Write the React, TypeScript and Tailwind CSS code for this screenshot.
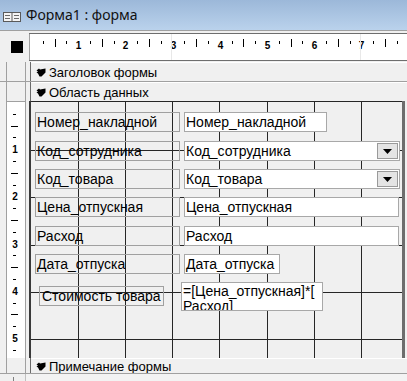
import React from "react";

const F = "font-['Liberation_Sans',Arial,sans-serif]";

const CM = 47.2;

function HRuler() {
  const items: React.ReactNode[] = [];
  for (let k = 0; k < 8; k++) {
    const b = 1 + CM * k;
    [11.8, 35.4].forEach((o, i) => {
      items.push(<rect key={`s${k}${i}`} x={Math.round(b + o)} y={7} width={1} height={3} fill="#000" />);
    });
    items.push(<rect key={`l${k}`} x={Math.round(b + 23.6)} y={5} width={1} height={8} fill="#000" />);
    if (k >= 1) {
      items.push(
        <text key={`n${k}`} x={Math.round(b) + 0.5} y={15} fontSize={10} fontWeight={700} textAnchor="middle" fontFamily="Liberation Sans, Arial, sans-serif" fill="#000">
          {k}
        </text>
      );
    }
  }
  return (
    <svg width={377} height={26} className="block">
      {items}
      <rect x={141} y={0} width={1} height={26} fill="#e8e8e8" />
      <rect x={330} y={0} width={1} height={26} fill="#e8e8e8" />
    </svg>
  );
}

function VRuler() {
  const items: React.ReactNode[] = [];
  for (let k = 0; k < 6; k++) {
    const b = CM * k;
    [11.8, 35.4].forEach((o, i) => {
      items.push(<rect key={`s${k}${i}`} x={6} y={Math.round(b + o)} width={3} height={1} fill="#000" />);
    });
    items.push(<rect key={`l${k}`} x={4} y={Math.round(b + 23.6)} width={7} height={1} fill="#000" />);
    if (k >= 1) {
      items.push(
        <text key={`n${k}`} x={8} y={Math.round(b) + 4} fontSize={10} fontWeight={700} textAnchor="middle" fontFamily="Liberation Sans, Arial, sans-serif" fill="#000">
          {k}
        </text>
      );
    }
  }
  return (
    <svg width={18} height={256} className="block">
      {items}
    </svg>
  );
}

function Grid() {
  const xs = [47, 94, 141, 188, 236, 283, 330];
  const ys = [48, 95, 143, 190, 237];
  return (
    <svg width={371} height={256} className="absolute left-0 top-0">
      {xs.map((x) => (
        <rect key={`x${x}`} x={x} y={0} width={1} height={256} fill="#262626" />
      ))}
      {ys.map((y) => (
        <rect key={`y${y}`} x={0} y={y} width={371} height={1} fill="#262626" />
      ))}
    </svg>
  );
}

function SectionIcon() {
  return (
    <svg width={10} height={9} viewBox="0 0 10 9" className="block">
      <path d="M0.5 2.5 L3 0.5 L4 1.5 L9.5 0.5 L9.5 4.5 L5.5 8.5 L3.5 8.5 L2 5.5 L0.5 4.5 L2 3.5 Z" fill="#000" />
    </svg>
  );
}

function SectionBar({ title }: { title: string }) {
  return (
    <div className="flex h-[19px]">
      <div className="w-[30px] h-full flex">
        <div className="ml-[6px] w-[20px] h-full border-x border-[#a0a0a0] bg-[#f0f0f0]" />
      </div>
      <div className="w-[1px] h-full bg-[#6a6a6a]" />
      <div className="flex-1 h-full flex items-center bg-[#f0f0f0] border-t border-white">
        <div className="ml-[5px] mr-[3px]">
          <SectionIcon />
        </div>
        <span className={`${F} text-[13px] text-black leading-none`}>{title}</span>
      </div>
    </div>
  );
}

function ComboButton() {
  return (
    <div className="absolute right-[1px] top-[1px] w-[21px] h-[16px] bg-[#e4e4e4] border border-[#9a9a9a] flex items-center justify-center">
      <svg width={9} height={5} viewBox="0 0 9 5" className="block">
        <path d="M0 0 H9 L4.5 5 Z" fill="#000" />
      </svg>
    </div>
  );
}

const LBL = `absolute h-[20px] border border-[#a0a0a0] text-[14px] leading-[18px] text-black whitespace-nowrap overflow-hidden ${F}`;
const TB = `absolute h-[20px] border border-[#a8a8a8] bg-white text-[14px] leading-[18px] text-black whitespace-nowrap overflow-hidden pl-[1px] ${F}`;

export default function App() {
  return (
    <div className="w-[407px] h-[381px] overflow-hidden bg-[#f0f0f0] flex flex-col">
      {/* Title bar */}
      <div className="h-[30px] flex items-center bg-linear-to-b from-[#9cb8d9] to-[#bad2ec]">
        <svg width={18} height={10} viewBox="0 0 18 10" className="ml-[3px] mt-[4px] block">
          <rect x={0.5} y={0.5} width={17} height={9} fill="#f4f4f4" stroke="#5a5a5a" />
          <rect x={8.5} y={0.5} width={1} height={9} fill="#5a5a5a" />
          <rect x={2} y={3} width={5} height={1} fill="#6a6a6a" />
          <rect x={2} y={6} width={5} height={1} fill="#6a6a6a" />
          <rect x={11} y={3} width={5} height={1} fill="#6a6a6a" />
          <rect x={11} y={6} width={5} height={1} fill="#6a6a6a" />
        </svg>
        <span className="ml-[5px] text-[14px] text-[#111] font-['Noto_Sans',sans-serif] leading-none">Форма1 : форма</span>
      </div>
      <div className="h-[1px] bg-[#a0a0a0]" />

      {/* Ruler row */}
      <div className="h-[31px] flex">
        <div className="w-[30px] h-full flex items-center">
          <div className="ml-[11px] w-[12px] h-[12px] bg-black" />
        </div>
        <div className="flex-1 flex flex-col">
          <div className="h-[2px]" />
          <div className="h-[1px] bg-[#6e6e6e]" />
          <div className="h-[26px] bg-white border-l border-[#a0a0a0]">
            <HRuler />
          </div>
          <div className="h-[1px] bg-[#6e6e6e]" />
          <div className="h-[1px]" />
        </div>
      </div>

      {/* Header section */}
      <SectionBar title="Заголовок формы" />
      <div className="h-[1px] bg-[#a0a0a0]" />
      <SectionBar title="Область данных" />

      {/* Detail */}
      <div className="h-[257px] flex">
        <div className="w-[31px] h-full flex">
          <div className="ml-[6px] w-[1px] bg-[#a0a0a0]" />
          <div className="w-[18px] h-full flex flex-col">
            <div className="h-[1px] bg-[#a0a0a0]" />
            <div className="bg-white">
              <VRuler />
            </div>
          </div>
          <div className="w-[1px] bg-[#a0a0a0]" />
          <div className="w-[3px]" />
          <div className="w-[2px] bg-[#3a3a3a]" />
        </div>
        <div className="w-[371px] h-full flex flex-col">
          <div className="h-[1px] bg-[#262626]" />
          <div className="relative h-[256px] bg-[#f0f0f0]">
            <Grid />

            <div className={`${LBL} left-[4px] top-[10px] w-[145px] pl-[1px]`}>Номер_накладной</div>
            <div className={`${TB} left-[153px] top-[10px] w-[143px]`}>Номер_накладной</div>

            <div className={`${LBL} left-[4px] top-[39px] w-[145px] pl-[1px]`}>Код_сотрудника</div>
            <div className={`${TB} left-[153px] top-[39px] w-[216px]`}>
              Код_сотрудника
              <ComboButton />
            </div>

            <div className={`${LBL} left-[4px] top-[67px] w-[145px] pl-[1px]`}>Код_товара</div>
            <div className={`${TB} left-[153px] top-[67px] w-[216px]`}>
              Код_товара
              <ComboButton />
            </div>

            <div className={`${LBL} left-[4px] top-[95px] w-[145px] pl-[1px]`}>Цена_отпускная</div>
            <div className={`${TB} left-[153px] top-[95px] w-[215px]`}>Цена_отпускная</div>

            <div className={`${LBL} left-[4px] top-[124px] w-[145px] pl-[1px]`}>Расход</div>
            <div className={`${TB} left-[153px] top-[124px] w-[215px]`}>Расход</div>

            <div className={`${LBL} left-[4px] top-[152px] w-[145px] pl-[1px]`}>Дата_отпуска</div>
            <div className={`${TB} left-[153px] top-[152px] w-[96px]`}>Дата_отпуска</div>

            <div className={`${LBL} left-[8px] top-[184px] w-[125px] pl-[2px]`}>Стоимость товара</div>
            <div className={`absolute left-[150px] top-[180px] w-[142px] h-[29px] border border-[#a8a8a8] bg-white text-[14px] leading-[15px] text-black overflow-hidden pl-[1px] pt-[1px] ${F}`}>
              <div className="whitespace-nowrap">=[Цена_отпускная]*[</div>
              <div className="whitespace-nowrap">Расход]</div>
            </div>
          </div>
        </div>
        <div className="w-[3px] h-full bg-[#6d6d6d]" />
        <div className="flex-1" />
      </div>

      {/* Footer section */}
      <div className="flex h-[15px]">
        <div className="w-[30px] h-full flex">
          <div className="ml-[6px] w-[20px] h-full border-x border-[#a0a0a0] bg-[#f0f0f0]" />
        </div>
        <div className="w-[1px] h-full bg-[#6a6a6a]" />
        <div className="flex-1 h-full flex items-end bg-[#f0f0f0] border-t border-white">
          <div className="ml-[5px] mr-[3px] mb-[2px]">
            <SectionIcon />
          </div>
          <span className={`${F} text-[13px] text-black leading-[13px]`}>Примечание формы</span>
        </div>
      </div>
      <div className="h-[1px] bg-[#a0a0a0]" />
      <div className="flex-1 flex">
        <div className="w-[13px]" />
        <div className="w-[1px] h-[4px] mt-[3px] bg-[#808080]" />
        <div className="w-[11px]" />
        <div className="w-[1px] bg-[#c0c0c0]" />
        <div className="flex-1 bg-[#f3f3f3]" />
      </div>
    </div>
  );
}
